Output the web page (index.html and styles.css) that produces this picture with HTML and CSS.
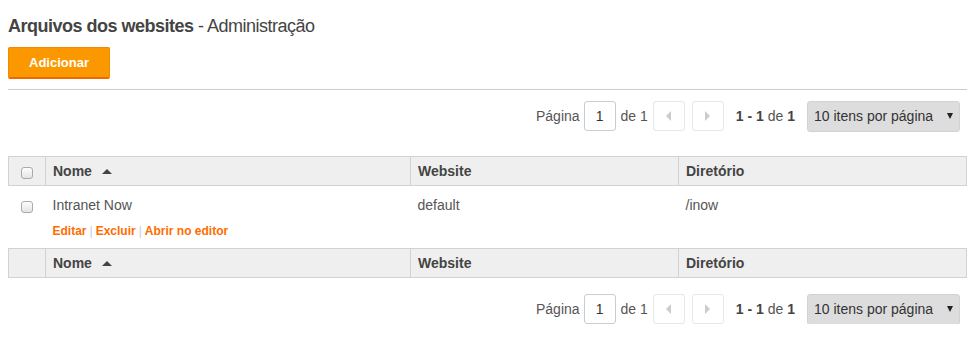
FILE: index.html
```html
<!DOCTYPE html>
<html lang="pt-BR">
<head>
    <meta charset="UTF-8">
    <title>Arquivos dos websites - Administração</title>
    <link rel="stylesheet" href="styles.css">
</head>
<body>
<h1 class="page-title"><b>Arquivos dos websites</b> - Administração</h1>
<div class="toolbar">
    <button class="btn-add">Adicionar</button>
</div>
<div class="pager">
    <span>Página</span>
    <input class="pager-input" type="text" value="1">
    <span>de 1</span>
    <span class="pager-btn"><i class="arrow-left"></i></span>
    <span class="pager-btn"><i class="arrow-right"></i></span>
    <span class="pager-info"><b>1 - 1</b> de <b>1</b></span>
    <div class="pager-select">10 itens por página<i class="caret"></i></div>
</div>
<table class="grid">
    <thead>
        <tr>
            <th class="col-check"><span class="check"></span></th>
            <th class="col-name">Nome <i class="sort-up"></i></th>
            <th class="col-site">Website</th>
            <th>Diretório</th>
        </tr>
    </thead>
    <tbody>
        <tr>
            <td class="col-check"><span class="check"></span></td>
            <td class="col-name">
                <div class="cell-text">Intranet Now</div>
                <div class="row-actions"><a href="#">Editar</a><span class="sep">|</span><a href="#">Excluir</a><span class="sep">|</span><a href="#">Abrir no editor</a></div>
            </td>
            <td><div class="cell-text">default</div></td>
            <td><div class="cell-text">/inow</div></td>
        </tr>
    </tbody>
    <tfoot>
        <tr>
            <th class="col-check"></th>
            <th class="col-name">Nome <i class="sort-up"></i></th>
            <th class="col-site">Website</th>
            <th>Diretório</th>
        </tr>
    </tfoot>
</table>
<div class="pager pager-bottom">
    <span>Página</span>
    <input class="pager-input" type="text" value="1">
    <span>de 1</span>
    <span class="pager-btn"><i class="arrow-left"></i></span>
    <span class="pager-btn"><i class="arrow-right"></i></span>
    <span class="pager-info"><b>1 - 1</b> de <b>1</b></span>
    <div class="pager-select">10 itens por página<i class="caret"></i></div>
</div>
</body>
</html>
```

FILE: styles.css
```css
*{margin: 0px;padding: 0px;box-sizing: border-box;}
body{
    margin: 8px;
    font-family: "Liberation Sans", Arial, sans-serif;
    font-size: 14px;
    color: #555;
    background: #fff;
}
.page-title{
    margin-top: 5px;
    font-size: 18px;
    line-height: 26px;
    font-weight: normal;
    color: #444;
    letter-spacing: -0.5px;
}
.page-title b{
    font-weight: bold;
}
.toolbar{
    margin-top: 8px;
    padding-bottom: 10px;
    border-bottom: 1px solid #ccc;
}
.btn-add{
    width: 102px;
    height: 32px;
    background: #fb9800;
    border: 1px solid #f28a00;
    border-bottom: 2px solid #f06a00;
    border-radius: 2px;
    color: #fff;
    font-family: inherit;
    font-size: 13px;
    font-weight: bold;
}
.pager{
    display: flex;
    align-items: center;
    justify-content: flex-end;
    height: 30px;
    margin-top: 11px;
    padding-right: 7px;
    color: #555;
}
.pager-input{
    width: 32px;
    height: 30px;
    margin: 0 5px 0 4px;
    border: 1px solid #ccc;
    border-radius: 3px;
    text-align: center;
    font-family: inherit;
    font-size: 14px;
    color: #333;
}
.pager-btn{
    width: 32px;
    height: 30px;
    margin-left: 5px;
    border: 1px solid #e6e6e6;
    border-radius: 3px;
    display: flex;
    align-items: center;
    justify-content: center;
}
.pager-btn + .pager-btn{
    margin-left: 7px;
}
.arrow-left{
    border-top: 5px solid transparent;
    border-bottom: 5px solid transparent;
    border-right: 5px solid #ccc;
}
.arrow-right{
    border-top: 5px solid transparent;
    border-bottom: 5px solid transparent;
    border-left: 5px solid #ccc;
}
.pager-info{
    margin-left: 12px;
    color: #555;
}
.pager-info b{
    color: #444;
}
.pager-select{
    width: 153px;
    height: 31px;
    margin-left: 12px;
    padding-left: 6px;
    background: #ddd;
    border: 1px solid #d2d2d2;
    border-radius: 3px;
    display: flex;
    align-items: center;
    color: #333;
}
.caret{
    margin-left: auto;
    margin-right: 6px;
    border-left: 3px solid transparent;
    border-right: 3px solid transparent;
    border-top: 6px solid #222;
}
.pager-bottom{
    margin-top: 16px;
}
.grid{
    width: 100%;
    margin-top: 25px;
    border-collapse: collapse;
}
.grid th{
    height: 29px;
    background: #efefef;
    border: 1px solid #d2d2d2;
    text-align: left;
    padding: 0 7px;
    font-weight: bold;
    color: #444;
}
.grid .col-check{
    width: 37px;
    padding: 0;
    text-align: center;
}
.grid .col-name{
    width: 365px;
}
.grid .col-site{
    width: 268px;
}
.sort-up{
    display: inline-block;
    margin-left: 6px;
    vertical-align: 2px;
    border-left: 5px solid transparent;
    border-right: 5px solid transparent;
    border-bottom: 5px solid #444;
}
.check{
    display: inline-block;
    width: 12px;
    height: 12px;
    margin-top: 3px;
    border: 1px solid #aaa;
    border-radius: 3px;
    background: linear-gradient(#fdfdfd, #e4e4e4);
    vertical-align: middle;
}
.grid td{
    vertical-align: top;
    padding: 10px 7px 0;
    height: 63px;
    color: #555;
}
.grid td.col-check{
    padding-top: 10px;
}
.cell-text{
    line-height: 18px;
}
.row-actions{
    margin-top: 10px;
    font-size: 12px;
    font-weight: bold;
    line-height: 14px;
}
.row-actions a{
    color: #ff6c00;
    text-decoration: none;
}
.sep{
    color: #ccc;
    font-weight: normal;
    margin: 0 3px;
}
```
